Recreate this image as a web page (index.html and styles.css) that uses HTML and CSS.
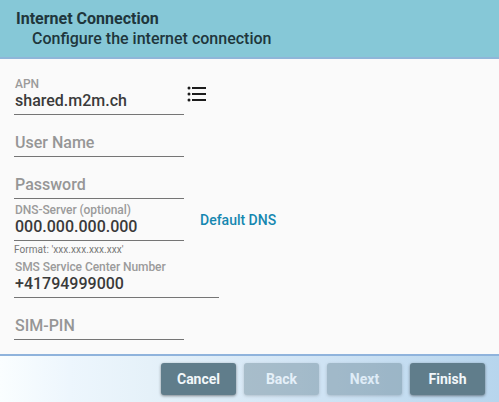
FILE: index.html
```html
<!DOCTYPE html>
<html lang="en">
<head>
<meta charset="utf-8">
<title>Internet Connection</title>
<link rel="stylesheet" href="styles.css">
</head>
<body>
<header class="header">
  <h1 class="title">Internet Connection</h1>
  <p class="subtitle">Configure the internet connection</p>
</header>
<main class="form">
  <div class="row">
    <div class="field"><span class="label">APN</span><span class="value">shared.m2m.ch</span></div>
    <svg class="list-icon" width="20" height="18" viewBox="0 0 20 18">
      <g fill="#1c1c1c"><circle cx="2" cy="3" r="1.5"/><circle cx="2" cy="9" r="1.5"/><circle cx="2" cy="15" r="1.5"/><path d="M5 2h14v2H5zM5 8h14v2H5zM5 14h14v2H5z"/></g>
    </svg>
  </div>
  <div class="field"><span class="placeholder">User Name</span></div>
  <div class="field"><span class="placeholder">Password</span></div>
  <div class="row">
    <div class="field"><span class="label">DNS-Server (optional)</span><span class="value">000.000.000.000</span></div>
    <a class="link">Default DNS</a>
  </div>
  <div class="hint">Format: 'xxx.xxx.xxx.xxx'</div>
  <div class="field wide"><span class="label">SMS Service Center Number</span><span class="value">+41794999000</span></div>
  <div class="field"><span class="placeholder">SIM-PIN</span></div>
</main>
<footer class="footer">
  <button class="btn">Cancel</button>
  <button class="btn" disabled>Back</button>
  <button class="btn" disabled>Next</button>
  <button class="btn">Finish</button>
</footer>
</body>
</html>
```
FILE: styles.css
```css
* { box-sizing: border-box; }
body {
  margin: 0;
  height: 402px;
  display: flex;
  flex-direction: column;
  overflow: hidden;
  background: #fafafa;
  font-family: Roboto, "Liberation Sans", sans-serif;
  font-weight: 500;
}
.header {
  height: 59px;
  padding: 9px 16px 0;
  background: #86c8d7;
  border-bottom: 2px solid #8fb6d9;
  color: #20363c;
}
.title, .subtitle { margin: 0; font-size: 16px; line-height: 20px; white-space: nowrap; }
.title { font-weight: 700; }
.subtitle { padding-left: 16px; font-weight: 500; }
.form { flex: 1; padding: 14px 14px 0; }
.row { display: flex; }
.field {
  width: 170px;
  height: 42px;
  padding: 4px 1px 0;
  border-bottom: 1px solid #757575;
  display: flex;
  flex-direction: column;
  align-items: flex-start;
  white-space: nowrap;
}
.wide { width: 205px; }
.label { font-size: 12px; letter-spacing: -.07px; line-height: 14px; color: #9b9b9b; }
.value { font-size: 16px; line-height: 20px; color: #3a3a3a; }
.placeholder { font-size: 16px; line-height: 20px; padding-top: 14px; color: #969696; }
.list-icon { margin: 12px 0 0 3px; }
.link { margin: 12px 0 0 16px; font-size: 14px; line-height: 18px; color: #1587b0; }
.hint { height: 15px; padding-top: 3px; font-size: 10px; font-weight: 400; letter-spacing: .07px; line-height: 12px; color: #777; }
.footer {
  height: 48px;
  border-top: 2px solid #8fb3dc;
  padding: 7px 14px 0;
  display: flex;
  justify-content: flex-end;
  gap: 8px;
  background: linear-gradient(90deg, #fafeff 0%, #edf6fd 14%, #e5f1f9 30%, #d2e5f5 60%, #b7d5ed 100%);
}
.btn {
  width: 75px;
  height: 32px;
  padding: 0;
  border: 0;
  border-radius: 3px;
  background: #607d8b;
  color: #f2f7fa;
  font: 700 14px/32px Roboto, "Liberation Sans", sans-serif;
  box-shadow: 0 1px 3px rgba(0, 0, 0, .45);
}
.btn:disabled { opacity: .4; color: #fff; }
```
